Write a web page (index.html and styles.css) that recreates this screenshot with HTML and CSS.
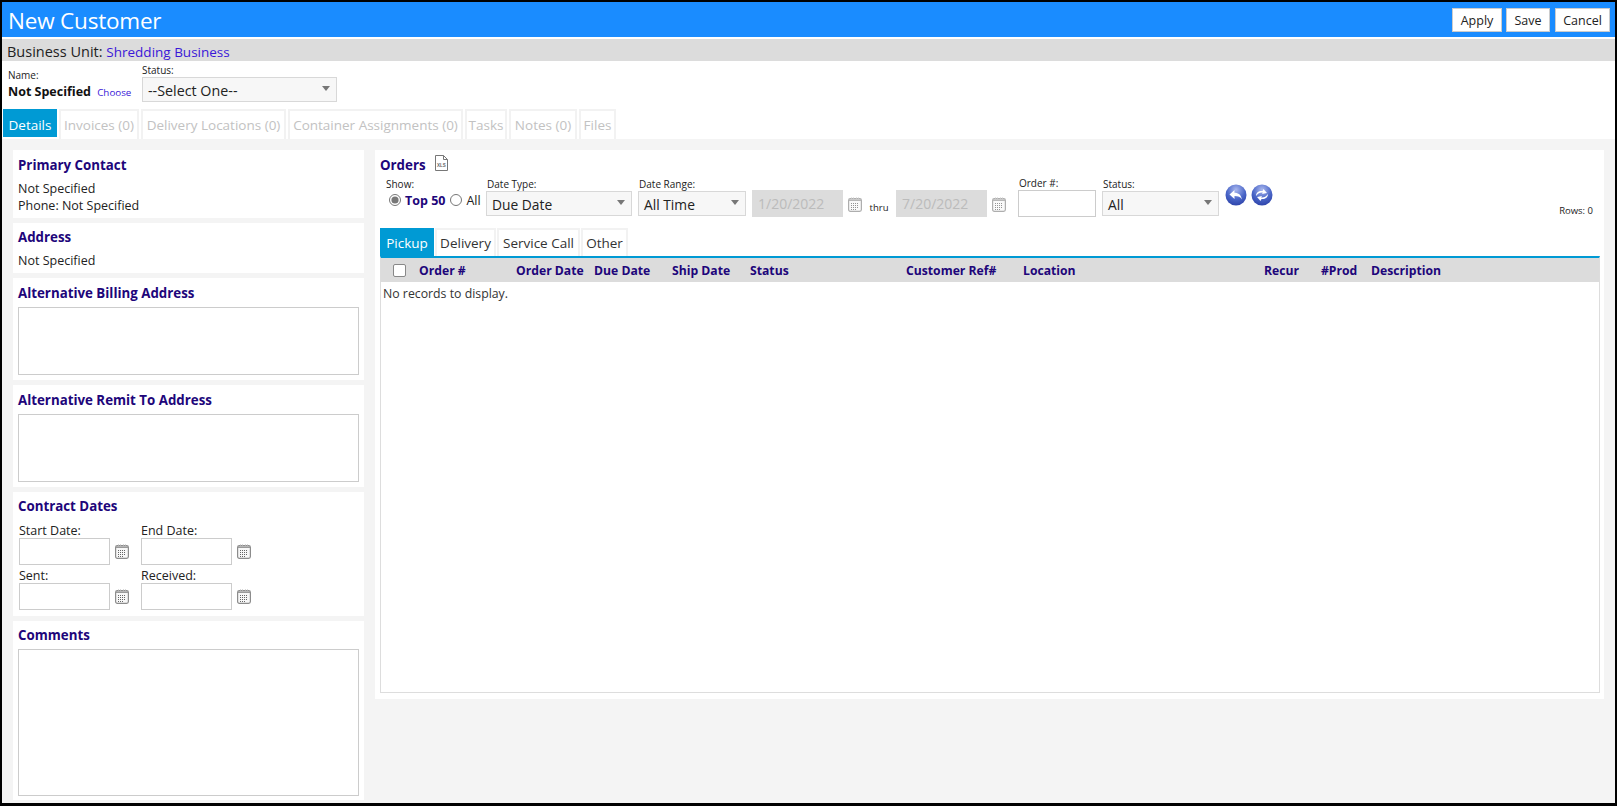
FILE: index.html
```html
<!DOCTYPE html>
<html lang="en">
<head>
    <meta charset="UTF-8">
    <title>New Customer</title>
    <link rel="stylesheet" href="styles.css">
</head>
<body>
    <svg class="defs" width="0" height="0">
        <defs>
            <radialGradient id="ball" cx="50%" cy="25%" r="80%">
                <stop offset="0" stop-color="#aab8ee"/>
                <stop offset="0.55" stop-color="#4a66c8"/>
                <stop offset="1" stop-color="#2a3fa6"/>
            </radialGradient>
            <symbol id="cal" viewBox="0 0 14 15">
                <rect x="0.6" y="1.6" width="12.8" height="12.8" rx="1.8" fill="#f8f8f8" stroke="#8c8c8c" stroke-width="1.2"/>
                <path d="M1 3.200h12" stroke="#9a9a9a" stroke-width="1.6"/>
                <path d="M3.500 0.500v1.500M5.500 0.500v1.500M8.500 0.500v1.500M10.500 0.500v1.500" stroke="#b0b0b0" stroke-width="1"/>
                <path d="M3 6.500h8M3 8.500h8M3 10.500h8M3 12.500h5" stroke="#666" stroke-width="1" stroke-dasharray="1 1"/>
            </symbol>
        </defs>
    </svg>

    <div class="page">
        <header class="title-bar">
            <h1>New Customer</h1>
            <div class="actions">
                <button class="btn btn-apply">Apply</button>
                <button class="btn btn-save">Save</button>
                <button class="btn btn-cancel">Cancel</button>
            </div>
        </header>
        <div class="unit-bar">Business Unit: <a href="#">Shredding Business</a></div>

        <div class="meta">
            <div class="meta-name">
                <label class="small">Name:</label>
                <div><b>Not Specified</b> <a class="choose" href="#">Choose</a></div>
            </div>
            <div class="meta-status">
                <label class="small">Status:</label>
                <div class="select select-status"><span>--Select One--</span><i></i></div>
            </div>
        </div>

        <nav class="tabs main-tabs">
            <a class="tab active tab-details">Details</a>
            <a class="tab tab-invoices">Invoices (0)</a>
            <a class="tab tab-locations">Delivery Locations (0)</a>
            <a class="tab tab-containers">Container Assignments (0)</a>
            <a class="tab tab-tasks">Tasks</a>
            <a class="tab tab-notes">Notes (0)</a>
            <a class="tab tab-files">Files</a>
        </nav>

        <main class="content">
            <aside class="left">
                <section class="panel p-contact">
                    <h3>Primary Contact</h3>
                    <div>Not Specified</div>
                    <div>Phone: Not Specified</div>
                </section>
                <section class="panel p-address">
                    <h3>Address</h3>
                    <div>Not Specified</div>
                </section>
                <section class="panel p-area">
                    <h3>Alternative Billing Address</h3>
                    <textarea class="area-small"></textarea>
                </section>
                <section class="panel p-area">
                    <h3>Alternative Remit To Address</h3>
                    <textarea class="area-small"></textarea>
                </section>
                <section class="panel p-dates">
                    <h3>Contract Dates</h3>
                    <div class="date-grid">
                        <div class="date-field">
                            <label>Start Date:</label>
                            <div class="date-row"><input type="text"><svg class="cal"><use href="#cal"/></svg></div>
                        </div>
                        <div class="date-field">
                            <label>End Date:</label>
                            <div class="date-row"><input type="text"><svg class="cal"><use href="#cal"/></svg></div>
                        </div>
                        <div class="date-field">
                            <label>Sent:</label>
                            <div class="date-row"><input type="text"><svg class="cal"><use href="#cal"/></svg></div>
                        </div>
                        <div class="date-field">
                            <label>Received:</label>
                            <div class="date-row"><input type="text"><svg class="cal"><use href="#cal"/></svg></div>
                        </div>
                    </div>
                </section>
                <section class="panel p-comments">
                    <h3>Comments</h3>
                    <textarea class="area-big"></textarea>
                </section>
            </aside>

            <section class="panel orders">
                <div class="orders-head">
                    <h3>Orders</h3>
                    <svg class="xls" width="13" height="16" viewBox="0 0 13 16">
                        <path d="M0.500 0.500h8l4 4v11h-12z M8.500 0.500v4h4" fill="#fff" stroke="#777"/>
                        <text x="6.500" y="11.500" text-anchor="middle" class="xls-text">XLS</text>
                    </svg>
                </div>

                <div class="filters">
                    <div class="f-show">
                        <label class="small">Show:</label>
                        <div class="radios">
                            <input type="radio" name="show" checked><b>Top 50</b>
                            <input type="radio" name="show"><span>All</span>
                        </div>
                    </div>
                    <div class="field">
                        <label class="small">Date Type:</label>
                        <div class="select select-type"><span>Due Date</span><i></i></div>
                    </div>
                    <div class="field">
                        <label class="small">Date Range:</label>
                        <div class="select select-range"><span>All Time</span><i></i></div>
                    </div>
                    <input class="date-off" type="text" value="1/20/2022" disabled>
                    <svg class="cal cal-off"><use href="#cal"/></svg>
                    <span class="thru">thru</span>
                    <input class="date-off" type="text" value="7/20/2022" disabled>
                    <svg class="cal cal-off"><use href="#cal"/></svg>
                    <div class="field f-order">
                        <label class="small">Order #:</label>
                        <input class="order-input" type="text">
                    </div>
                    <div class="field f-status">
                        <label class="small">Status:</label>
                        <div class="select select-all"><span>All</span><i></i></div>
                    </div>
                    <svg class="ball ball-first" viewBox="0 0 22 22">
                        <circle cx="11" cy="11" r="10.500" fill="url(#ball)"/>
                        <path d="M4.500 10.500l5-4.500v2.700c4 0 6.500 2 7.500 6.800-1.600-2.600-3.800-3.500-7.500-3.500v3z" fill="#fff"/>
                    </svg>
                    <svg class="ball" viewBox="0 0 22 22">
                        <circle cx="11" cy="11" r="10.500" fill="url(#ball)"/>
                        <path d="M5 12c0-3.500 3-5.500 6.500-5l1-2 3.500 4-5 1 .8-1.500c-2.600-.3-4.800.8-6.800 3.500z" fill="#fff"/>
                        <path d="M17 10c0 3.500-3 5.500-6.500 5l-1 2-3.500-4 5-1-.8 1.500c2.600.3 4.800-.8 6.800-3.500z" fill="#fff"/>
                    </svg>
                    <span class="rows">Rows: 0</span>
                </div>

                <nav class="tabs order-tabs">
                    <a class="tab active tab-pickup">Pickup</a>
                    <a class="tab tab-delivery">Delivery</a>
                    <a class="tab tab-service">Service Call</a>
                    <a class="tab tab-other">Other</a>
                </nav>

                <div class="grid">
                    <div class="grid-head">
                        <div><input type="checkbox"></div>
                        <div>Order #</div>
                        <div>Order Date</div>
                        <div>Due Date</div>
                        <div>Ship Date</div>
                        <div>Status</div>
                        <div>Customer Ref#</div>
                        <div>Location</div>
                        <div>Recur</div>
                        <div>#Prod</div>
                        <div>Description</div>
                    </div>
                    <div class="grid-empty">No records to display.</div>
                </div>
            </section>
        </main>
    </div>
</body>
</html>
```

FILE: styles.css
```css
* { box-sizing: border-box; }
html, body { margin: 0; height: 100%; }
body {
    font-family: "Open Sans", "Liberation Sans", sans-serif;
    font-size: 12.5px;
    color: #222;
    overflow: hidden;
}
.defs { position: absolute; }
a { color: #3a17d8; text-decoration: none; }
h1, h3 { margin: 0; }

.page {
    width: 1617px;
    height: 806px;
    border: 2px solid #000;
    border-bottom-width: 3px;
    background: #fff;
    display: flex;
    flex-direction: column;
}

/* title */
.title-bar {
    height: 37px;
    flex: none;
    background: #1a8cff;
    border-bottom: 2px solid #fff;
    display: flex;
    justify-content: space-between;
    align-items: flex-start;
    padding: 6px 5px 0 6px;
}
.title-bar h1 { font-size: 22.5px; font-weight: 400; line-height: 26px; color: #fff; letter-spacing: -0.2px; }
.actions { display: flex; }
.btn {
    height: 24px;
    padding: 0;
    border: 1px solid #ccc;
    background: #fff;
    font: 12.5px "Open Sans", sans-serif;
    color: #222;
}
.btn-apply { width: 50px; }
.btn-save { width: 44px; margin-left: 4px; }
.btn-cancel { width: 55px; margin-left: 5px; }

.unit-bar {
    height: 22px;
    flex: none;
    background: #dcdcdc;
    padding-left: 5px;
    font-size: 14.5px;
    line-height: 26px;
}
.unit-bar a { font-size: 13.5px; }

/* name and status */
.meta { height: 48px; flex: none; display: flex; }
.small { display: block; font-size: 10px; line-height: 13px; }
.meta-name { width: 140px; padding: 8px 0 0 6px; flex: none; }
.meta-name b { font-size: 12.5px; color: #111; }
.meta-name > div { line-height: 18px; margin-top: 1px; }
.choose { font-size: 9.800px; margin-left: 3px; }
.meta-status { padding-top: 3px; }

.select {
    height: 25px;
    background: #f7f7f7;
    border: 1px solid #d8d8d8;
    display: flex;
    align-items: center;
    justify-content: space-between;
    padding: 1px 6px 0 5px;
    font-size: 13.800px;
}
.select i {
    width: 0;
    height: 0;
    margin-bottom: 4px;
    border: 4.500px solid transparent;
    border-top: 5px solid #777;
    border-bottom: 0;
}
.select-status { width: 195px; font-size: 14.300px; }
.select-type { width: 146px; }
.select-range { width: 108px; }
.select-all { width: 117px; }

/* tabs */
.tabs { display: flex; flex: none; }
.tab {
    display: block;
    height: 30px;
    margin-right: 2px;
    border: 2px solid #f2f2f2;
    border-bottom: 0;
    text-align: center;
    line-height: 28px;
    color: #c2c2c2;
    font-size: 13.500px;
}
.tab.active { background: #009ad4; border-color: #009ad4; color: #fff; height: 28px; }
.main-tabs { padding-left: 1px; }
.tab-details { width: 54px; }
.tab-invoices { width: 80px; }
.tab-locations { width: 145px; }
.tab-containers { width: 175px; }
.tab-tasks { width: 42px; }
.tab-notes { width: 68px; }
.tab-files { width: 37px; }

/* page body */
.content {
    flex: 1;
    min-height: 0;
    background: #f4f4f4;
    display: flex;
    gap: 11px;
    padding: 11px 11px 0 11px;
}
.left { width: 351px; flex: none; display: flex; flex-direction: column; gap: 5px; }
.panel { background: #fff; padding: 7px 5px 5px 5px; line-height: 17px; }
.panel h3 { font-size: 13.300px; line-height: 17px; color: #20057a; margin-bottom: 6px; }
.p-contact { height: 68px; }
.p-address { height: 50px; padding-top: 6px; }
.p-area { height: 102px; }
.p-area h3 { margin-bottom: 5px; }
.p-dates { height: 124px; padding-top: 6px; }
.p-dates h3 { margin-bottom: 7px; }
.p-comments { height: 179px; padding-top: 6px; }
.p-comments h3 { margin-bottom: 5px; }

textarea, input[type="text"] {
    display: block;
    margin: 0;
    padding: 0;
    border: 1px solid #ccc;
    background: #fff;
    resize: none;
}
.panel textarea { width: 341px; }
.area-small { height: 68px; }
.area-big { height: 147px; }

.date-grid { display: grid; grid-template-columns: 122px 120px; padding-left: 1px; row-gap: 2px; }
.date-field label { display: block; height: 16px; line-height: 18px; }
.date-row { display: flex; align-items: center; }
.date-row input { width: 91px; height: 27px; }
.cal { width: 14px; height: 15px; margin-left: 5px; flex: none; }

/* orders */
.orders { flex: 1; height: 549px; padding: 7px 4px 6px 5px; display: flex; flex-direction: column; }
.orders-head { display: flex; height: 20px; }
.orders-head h3 { margin: 0; line-height: 17px; }
.xls { margin: -2px 0 0 9px; }
.xls-text { font: 700 4.500px "Liberation Sans", sans-serif; fill: #666; }

.filters { display: flex; align-items: flex-start; height: 51px; flex: none; }
.filters > * { flex: none; }
.f-show { width: 106px; padding-left: 6px; white-space: nowrap; }
.f-show .small { line-height: 14px; margin-top: 0; }
.radios { display: flex; align-items: center; height: 20px; margin-top: -1px; padding-left: 3px; font-size: 12.5px; }
.radios input { margin: 0 4px 0 0; width: 12px; height: 12px; accent-color: #777; }
.radios b { color: #20057a; margin-right: 5px; }
.field { margin-right: 6px; }
.field .small { padding-left: 1px; line-height: 14px; }
.date-off {
    width: 91px;
    height: 27px;
    margin-top: 13px !important;
    padding-left: 5px !important;
    background: #dcdcdc !important;
    border-color: #dcdcdc !important;
    font: 14px "Open Sans", sans-serif;
    color: #bbb;
}
.cal-off { margin-top: 20px; opacity: 0.7; }
.thru { width: 34px; margin-top: 24px; text-align: center; font-size: 9.500px; line-height: 14px; }
.f-order { margin-left: 12px; }
.order-input { width: 78px; height: 27px; }
.f-order .small { line-height: 13px; }
.f-status { margin-right: 6px; }
.ball { width: 22px; height: 22px; margin: 7px 4px 0 0; }
.rows { margin: 27px 7px 0 auto; font-size: 9.500px; line-height: 14px; }

.order-tabs .tab { color: #333; height: 28px; margin-right: 1px; line-height: 26px; }
.order-tabs .tab.active { color: #fff; }
.tab-pickup { width: 54px; }
.tab-delivery { width: 61px; }
.tab-service { width: 83px; }
.tab-other { width: 47px; }

.grid { flex: 1; display: flex; flex-direction: column; border: 1px solid #ddd; border-top: 2px solid #009ad4; }
.grid-head {
    height: 24px;
    flex: none;
    background: #dcdcdc;
    display: grid;
    grid-template-columns: 38px 97px 78px 78px 78px 156px 117px 241px 57px 50px 1fr;
    align-items: center;
    font-weight: 700;
    color: #20057a;
    font-size: 12.200px;
}
.grid-head input {
    appearance: none;
    display: block;
    margin: 0 0 0 12px;
    width: 13px;
    height: 13px;
    background: #fff;
    border: 1px solid #888;
    border-radius: 2px;
}
.grid-empty { padding: 2px 2px; line-height: 19px; font-size: 12.300px; color: #333; }
```
